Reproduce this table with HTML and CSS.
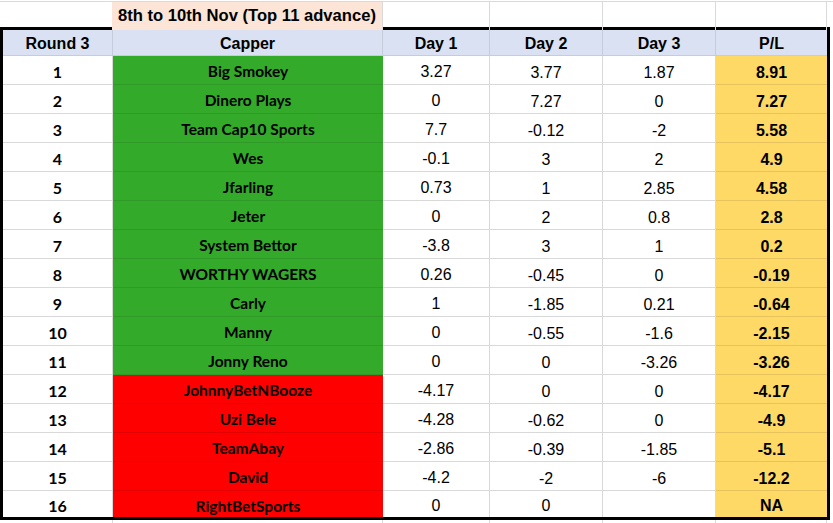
FILE: index.html
```html
<!DOCTYPE html>
<html>
<head>
<meta charset="utf-8">
<link rel="stylesheet" href="styles.css">
</head>
<body>
<div class="sheet">
  <div class="title-row">
    <div class="cell c1"></div>
    <div class="cell c2 title">8th to 10th Nov (Top 11 advance)</div>
    <div class="cell c3"></div>
    <div class="cell c4"></div>
    <div class="cell c5"></div>
    <div class="cell c6"></div>
  </div>
  <div class="table">
    <div class="row head">
      <div class="cell">Round 3</div>
      <div class="cell">Capper</div>
      <div class="cell">Day 1</div>
      <div class="cell">Day 2</div>
      <div class="cell">Day 3</div>
      <div class="cell">P/L</div>
    </div>
    <div class="row"><div class="cell rank">1</div><div class="cell name win">Big Smokey</div><div class="cell num d1">3.27</div><div class="cell num">3.77</div><div class="cell num">1.87</div><div class="cell pl">8.91</div></div>
    <div class="row"><div class="cell rank">2</div><div class="cell name win">Dinero Plays</div><div class="cell num d1">0</div><div class="cell num">7.27</div><div class="cell num">0</div><div class="cell pl">7.27</div></div>
    <div class="row"><div class="cell rank">3</div><div class="cell name win">Team Cap10 Sports</div><div class="cell num d1">7.7</div><div class="cell num">-0.12</div><div class="cell num">-2</div><div class="cell pl">5.58</div></div>
    <div class="row"><div class="cell rank">4</div><div class="cell name win">Wes</div><div class="cell num d1">-0.1</div><div class="cell num">3</div><div class="cell num">2</div><div class="cell pl">4.9</div></div>
    <div class="row"><div class="cell rank">5</div><div class="cell name win">Jfarling</div><div class="cell num d1">0.73</div><div class="cell num">1</div><div class="cell num">2.85</div><div class="cell pl">4.58</div></div>
    <div class="row"><div class="cell rank">6</div><div class="cell name win">Jeter</div><div class="cell num d1">0</div><div class="cell num">2</div><div class="cell num">0.8</div><div class="cell pl">2.8</div></div>
    <div class="row"><div class="cell rank">7</div><div class="cell name win">System Bettor</div><div class="cell num d1">-3.8</div><div class="cell num">3</div><div class="cell num">1</div><div class="cell pl">0.2</div></div>
    <div class="row"><div class="cell rank">8</div><div class="cell name win">WORTHY WAGERS</div><div class="cell num d1">0.26</div><div class="cell num">-0.45</div><div class="cell num">0</div><div class="cell pl">-0.19</div></div>
    <div class="row"><div class="cell rank">9</div><div class="cell name win">Carly</div><div class="cell num d1">1</div><div class="cell num">-1.85</div><div class="cell num">0.21</div><div class="cell pl">-0.64</div></div>
    <div class="row"><div class="cell rank">10</div><div class="cell name win">Manny</div><div class="cell num d1">0</div><div class="cell num">-0.55</div><div class="cell num">-1.6</div><div class="cell pl">-2.15</div></div>
    <div class="row"><div class="cell rank">11</div><div class="cell name win">Jonny Reno</div><div class="cell num d1">0</div><div class="cell num">0</div><div class="cell num">-3.26</div><div class="cell pl">-3.26</div></div>
    <div class="row"><div class="cell rank">12</div><div class="cell name lose">JohnnyBetNBooze</div><div class="cell num d1">-4.17</div><div class="cell num">0</div><div class="cell num">0</div><div class="cell pl">-4.17</div></div>
    <div class="row"><div class="cell rank">13</div><div class="cell name lose">Uzi Bele</div><div class="cell num d1">-4.28</div><div class="cell num">-0.62</div><div class="cell num">0</div><div class="cell pl">-4.9</div></div>
    <div class="row"><div class="cell rank">14</div><div class="cell name lose">TeamAbay</div><div class="cell num d1">-2.86</div><div class="cell num">-0.39</div><div class="cell num">-1.85</div><div class="cell pl">-5.1</div></div>
    <div class="row"><div class="cell rank">15</div><div class="cell name lose">David</div><div class="cell num d1">-4.2</div><div class="cell num">-2</div><div class="cell num">-6</div><div class="cell pl">-12.2</div></div>
    <div class="row last"><div class="cell rank">16</div><div class="cell name lose">RightBetSports</div><div class="cell num d1">0</div><div class="cell num">0</div><div class="cell num"></div><div class="cell pl">NA</div></div>
  </div>
  <div class="foot-row">
    <div class="cell c1"></div>
    <div class="cell c2"></div>
    <div class="cell c3"></div>
    <div class="cell c4"></div>
    <div class="cell c5"></div>
    <div class="cell c6"></div>
  </div>
</div>
</body>
</html>
```

FILE: styles.css
```css
html, body {
  margin: 0;
  padding: 0;
  background: #ffffff;
}
body {
  width: 833px;
  height: 523px;
  overflow: hidden;
  font-family: "Liberation Sans", Arial, sans-serif;
  color: #000;
}
.sheet {
  width: 833px;
}
.title-row, .foot-row {
  display: grid;
  grid-template-columns: 113px 270px 107px 113px 113px 111px 6px;
  border-top: 1px solid #dadada;
  margin-top: 1px;
  height: 25px;
}
.foot-row {
  margin-top: 0;
  border-top: none;
  height: 3px;
}
.title-row .cell, .foot-row .cell {
  border-right: 1px solid #dadada;
}
.title {
  background: #fce4d6;
  font-weight: bold;
  font-size: 16.6px;
  text-align: center;
  line-height: 28px;
  margin-left: -1px;
  white-space: nowrap;
}
.table {
  width: 824px;
  border: 3px solid #000;
}
.row {
  display: grid;
  grid-template-columns: 110px 270px 107px 113px 113px 111px;
  height: 29px;
}
.row .cell {
  border-bottom: 1px solid #d9d9d9;
  border-right: 1px solid #d9d9d9;
  box-sizing: border-box;
  text-align: center;
  font-size: 16px;
  line-height: 30px;
  padding-top: 2px;
  white-space: nowrap;
  overflow: hidden;
}
.row .cell:last-child {
  border-right: none;
}
.row.head {
  height: 26px;
}
.row.head .cell {
  background: #d9e1f2;
  font-weight: bold;
  line-height: 27px;
  padding-top: 0;
  border-color: #c5cddc;
}
.row.last {
  height: 26px;
}
.row.last .cell {
  border-bottom: none;
  line-height: 28px;
  padding-top: 1px;
}
.row .rank, .row .name {
  font-family: Lato, "Open Sans", sans-serif;
  font-weight: bold;
  padding-top: 0;
}
.row .rank {
  font-size: 16px;
  line-height: 31px;
}
.row .name {
  font-size: 15.5px;
  line-height: 30px;
  border-right: none;
}
.win {
  background: #33aa2a;
  border-bottom-color: #2f9a27 !important;
}
.lose {
  background: #ff0000;
  border-bottom-color: #e20000 !important;
}
.row .d1 {
  padding-top: 1px;
}
.pl {
  background: #ffd966;
  font-weight: bold;
  border-bottom-color: #e6c35c !important;
}
```
